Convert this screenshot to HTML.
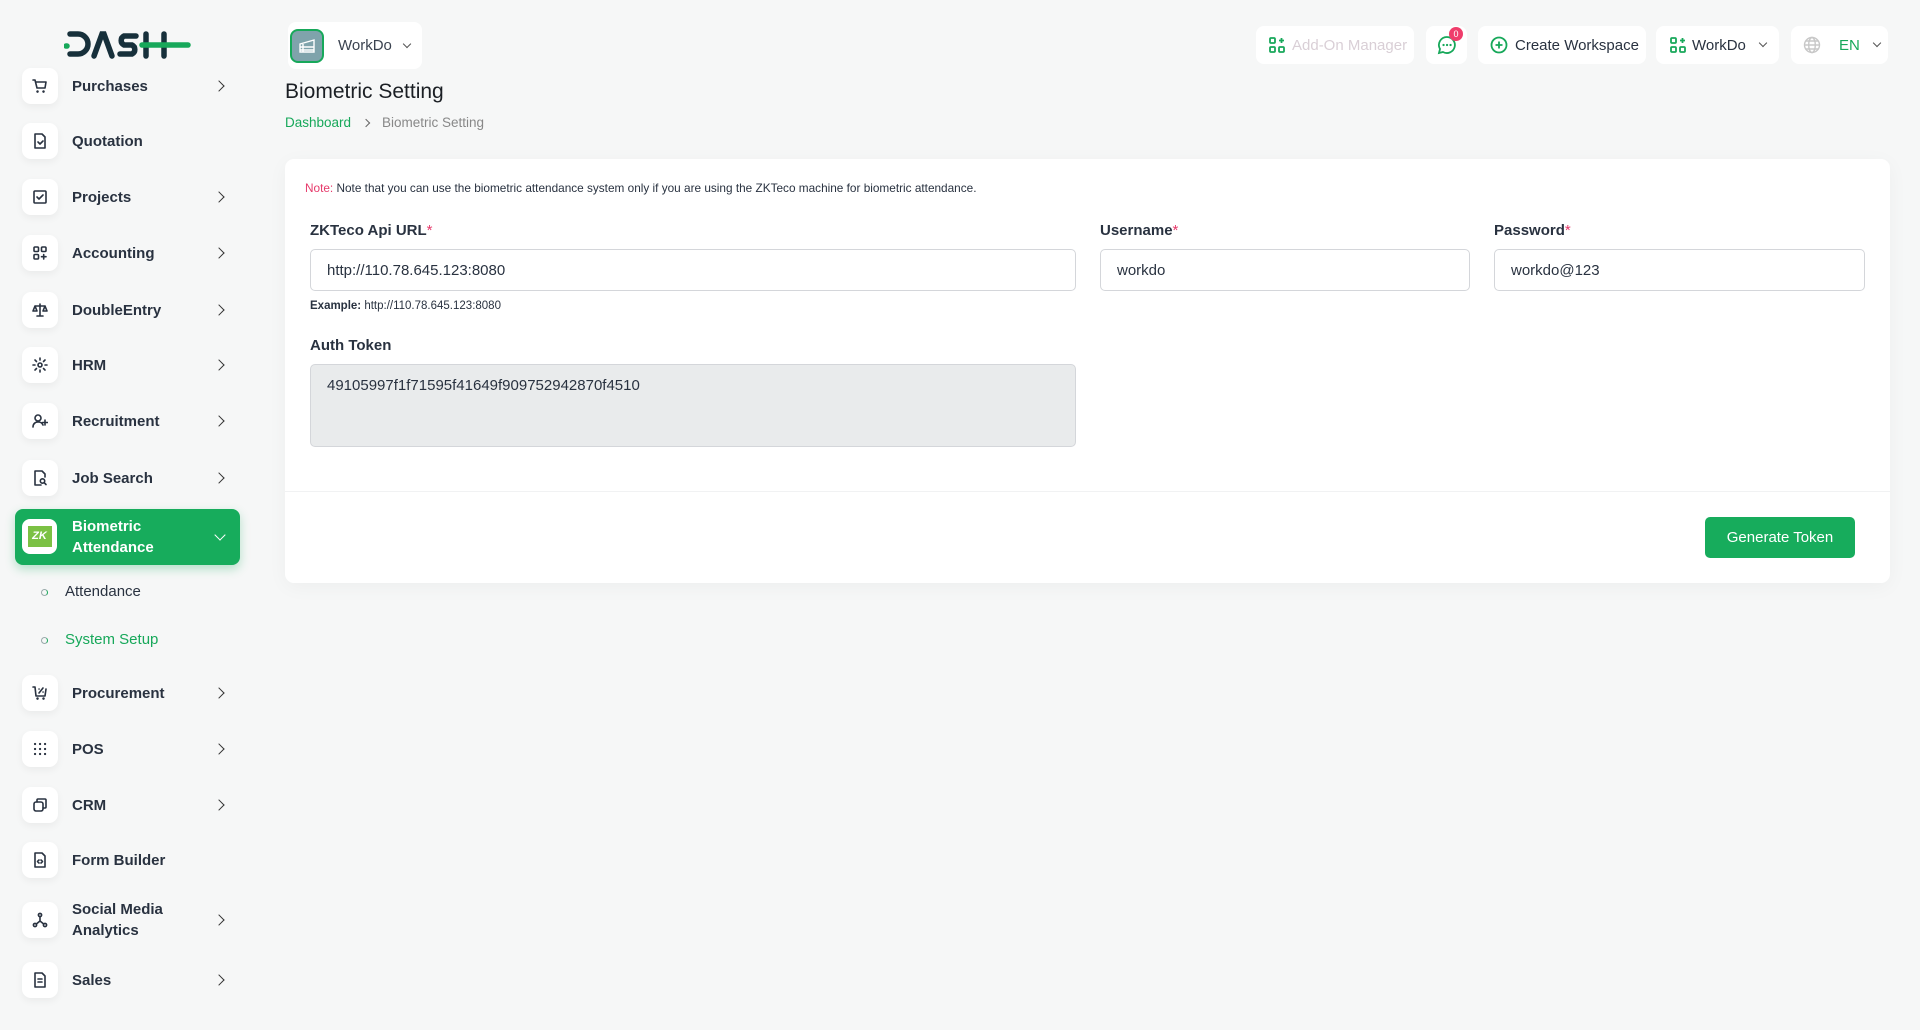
<!DOCTYPE html>
<html><head><meta charset="utf-8"><style>
*{box-sizing:border-box;margin:0;padding:0}
body{width:1920px;height:1030px;background:#f6f7f7;font-family:"Liberation Sans",sans-serif;color:#293240;position:relative;overflow:hidden}
.abs{position:absolute}
.item{position:absolute;left:22px;width:210px;height:40px;display:flex;align-items:center}
.ib{width:36px;height:36px;background:#fff;border-radius:9px;box-shadow:0 3px 8px rgba(0,0,0,.05);display:flex;align-items:center;justify-content:center;flex:none}
.ib svg{width:16px;height:16px;fill:none;stroke:#293240;stroke-width:1.6;stroke-linecap:round;stroke-linejoin:round}
.it{margin-left:14px;font-size:15px;font-weight:bold;color:#293240;line-height:21px}
.chev{position:absolute;left:193px;top:16px;width:8px;height:8px;border-right:1.6px solid #333;border-top:1.6px solid #333;transform:rotate(45deg)}
.tb{position:absolute;top:26px;height:38px;background:#fff;border-radius:8px;display:flex;align-items:center;font-size:15px;color:#293240}
.card{position:absolute;left:285px;top:159px;width:1605px;height:424px;background:#fff;border-radius:9px;box-shadow:0 4px 20px rgba(0,0,0,.04)}
.lbl{position:absolute;font-size:15px;font-weight:bold;color:#293240}
.lbl b{color:#e6396a;font-weight:normal}
.inp{position:absolute;height:42px;border:1px solid #d4d6da;border-radius:5px;font-size:15px;color:#293240;padding:12px 16px;background:#fff}
.dot{position:absolute;left:41px;width:7px;height:7px;border-radius:50%;border:1.5px solid #9aa;border-right-color:#17a85a}
</style></head><body>
<svg class="abs" style="left:64px;top:28px" width="128" height="34" viewBox="0 0 128 34">
<g fill="none" stroke="#17303b" stroke-width="5.5" stroke-linecap="round">
<path d="M6 6h8a10 10 0 0 1 0 20h-8"/>
<path d="M30 28L38 6h2L48 28"/>
<path d="M72 8h-12a5 5 0 0 0 0 9h8a5 5 0 0 1 0 9h-12"/>
<path d="M82 6v22M100 6v22"/>
</g>
<path d="M3 18h-1" stroke="#17a85a" stroke-width="5.5" stroke-linecap="round"/>
<path d="M78 17h46" stroke="#17a85a" stroke-width="5.5" stroke-linecap="round"/>
</svg>
<div class="item" style="top:66px"><div class="ib"><svg viewBox="0 0 16 16"><path d="M1 2h2l2 8h8l1-6H4M6 13.5a.5.5 0 1 0 0 .1M12 13.5a.5.5 0 1 0 0 .1"/></svg></div><div class="it">Purchases</div><div class="chev"></div></div>
<div class="item" style="top:121px"><div class="ib"><svg viewBox="0 0 16 16"><path d="M3 1h7l3 3v11H3zM6 9l2 2 3-3"/></svg></div><div class="it">Quotation</div></div>
<div class="item" style="top:177px"><div class="ib"><svg viewBox="0 0 16 16"><rect x="2" y="2" width="12" height="12" rx="1"/><path d="M5 8l2 2 4-4"/></svg></div><div class="it">Projects</div><div class="chev"></div></div>
<div class="item" style="top:233px"><div class="ib"><svg viewBox="0 0 16 16"><rect x="2" y="2" width="4.5" height="4.5" rx="1"/><rect x="9.5" y="2" width="4.5" height="4.5" rx="1"/><rect x="2" y="9.5" width="4.5" height="4.5" rx="1"/><path d="M11.7 9.5v4.5M9.5 11.7H14"/></svg></div><div class="it">Accounting</div><div class="chev"></div></div>
<div class="item" style="top:290px"><div class="ib"><svg viewBox="0 0 16 16"><path d="M8 2v12M3 4h10M3 4l-2 5h4zM13 4l-2 5h4zM5 14h6"/></svg></div><div class="it">DoubleEntry</div><div class="chev"></div></div>
<div class="item" style="top:345px"><div class="ib"><svg viewBox="0 0 16 16"><circle cx="8" cy="8" r="2"/><path d="M8 1v2M8 13v2M1 8h2M13 8h2M3 3l1.5 1.5M11.5 11.5L13 13M3 13l1.5-1.5M11.5 4.5L13 3"/></svg></div><div class="it">HRM</div><div class="chev"></div></div>
<div class="item" style="top:401px"><div class="ib"><svg viewBox="0 0 16 16"><circle cx="6" cy="5" r="3"/><path d="M1 14c0-3 2-5 5-5s4 1 5 3M13 7v5M10.5 9.5h5"/></svg></div><div class="it">Recruitment</div><div class="chev"></div></div>
<div class="item" style="top:458px"><div class="ib"><svg viewBox="0 0 16 16"><path d="M9 15H3V1h7l3 3v3"/><circle cx="10.5" cy="11" r="2.2"/><path d="M12.2 12.7L14 14.5"/></svg></div><div class="it">Job Search</div><div class="chev"></div></div>
<div class="abs" style="left:15px;top:509px;width:225px;height:56px;background:#17ac5c;border-radius:8px;box-shadow:0 4px 10px rgba(23,172,92,.3)"></div>
<div class="abs" style="left:22px;top:519px;width:35px;height:35px;background:#fff;border-radius:8px;display:flex;align-items:center;justify-content:center"><div style="width:24px;height:21px;background:#7bc144;color:#fff;font-size:11px;font-weight:bold;font-style:italic;text-align:center;line-height:21px">ZK</div></div>
<div class="abs" style="left:72px;top:516px;font-size:15px;font-weight:bold;color:#fff;line-height:21px">Biometric<br>Attendance</div>
<div class="abs" style="left:216px;top:531px;width:8px;height:8px;border-right:1.6px solid #fff;border-bottom:1.6px solid #fff;transform:rotate(45deg)"></div>
<div class="dot" style="top:589px"></div>
<div class="abs" style="left:65px;top:583px;font-size:15px;color:#293240">Attendance</div>
<div class="dot" style="top:637px"></div>
<div class="abs" style="left:65px;top:631px;font-size:15px;color:#17a85a">System Setup</div>
<div class="item" style="top:673px"><div class="ib"><svg viewBox="0 0 16 16"><path d="M1 2h2l1 9h9l1-7M6 13.5a.5.5 0 1 0 0 .1M12 13.5a.5.5 0 1 0 0 .1M7 8l4-5M7 4h.1M11 7h.1"/></svg></div><div class="it">Procurement</div><div class="chev"></div></div>
<div class="item" style="top:729px"><div class="ib"><svg viewBox="0 0 16 16" style="stroke-width:2.2"><path d="M3 3h.1M8 3h.1M13 3h.1M3 8h.1M8 8h.1M13 8h.1M3 13h.1M8 13h.1M13 13h.1"/></svg></div><div class="it">POS</div><div class="chev"></div></div>
<div class="item" style="top:785px"><div class="ib"><svg viewBox="0 0 16 16"><rect x="2" y="5" width="9" height="9" rx="2"/><path d="M5 5V3a1 1 0 0 1 1-1h7a1 1 0 0 1 1 1v7a1 1 0 0 1-1 1h-2"/></svg></div><div class="it">CRM</div><div class="chev"></div></div>
<div class="item" style="top:840px"><div class="ib"><svg viewBox="0 0 16 16"><path d="M3 1h7l3 3v11H3zM7 8l-1.5 1.5L7 11M9 8l1.5 1.5L9 11"/></svg></div><div class="it">Form Builder</div></div>
<div class="item" style="top:900px"><div class="ib"><svg viewBox="0 0 16 16"><circle cx="8" cy="3" r="1.6"/><circle cx="3" cy="13" r="1.6"/><circle cx="13" cy="13" r="1.6"/><path d="M8 4.6V9L4.3 12M8 9l3.7 3"/></svg></div><div class="it">Social Media<br>Analytics</div><div class="chev"></div></div>
<div class="item" style="top:960px"><div class="ib"><svg viewBox="0 0 16 16"><path d="M3 1h7l3 3v11H3zM6 7h4M6 10h4"/></svg></div><div class="it">Sales</div><div class="chev"></div></div>
<div class="tb" style="left:288px;top:22px;height:47px;width:134px">
<div style="margin-left:2px;width:34px;height:34px;border-radius:8px;background:#7fa3ab;border:2.5px solid #17a85a;display:flex;align-items:center;justify-content:center"><svg width="18" height="16" viewBox="0 0 18 16"><path d="M2 6l14-4v12H2zM2 9h14M2 12h14M5 6v8" stroke="#fff" stroke-width="1.4" fill="none"/></svg></div>
<span style="margin-left:14px;font-size:15px;color:#3b4350">WorkDo</span>
<span style="margin-left:12px;width:6px;height:6px;border-right:1.3px solid #555;border-bottom:1.3px solid #555;transform:rotate(45deg);margin-top:-4px"></span></div>
<div class="abs" style="left:285px;top:80px;font-size:21px;color:#1b1f24">Biometric Setting</div>
<div class="abs" style="left:285px;top:115px;font-size:13.5px;color:#17a85a">Dashboard</div>
<div class="abs" style="left:363px;top:120px;width:6px;height:6px;border-right:1.2px solid #666;border-top:1.2px solid #666;transform:rotate(45deg)"></div>
<div class="abs" style="left:382px;top:115px;font-size:13.5px;color:#888">Biometric Setting</div>
<div class="tb" style="left:1256px;width:158px"><svg style="margin-left:13px" width="16" height="16" viewBox="0 0 16 16" fill="none" stroke="#17a85a" stroke-width="1.8"><rect x="1" y="1" width="5" height="5" rx="1"/><rect x="1" y="10" width="5" height="5" rx="1"/><rect x="10" y="10" width="5" height="5" rx="1"/><path d="M12.5 1v5M10 3.5h5"/></svg><span style="margin-left:7px;color:#d9cfd6">Add-On Manager</span></div>
<div class="tb" style="left:1426px;width:41px;justify-content:center"><svg width="20" height="20" viewBox="0 0 20 20" fill="none" stroke="#17a85a" stroke-width="1.8"><path d="M10 2a8 8 0 1 1-4 15l-4 1 1-4A8 8 0 0 1 10 2z"/><path d="M6.5 10h.1M10 10h.1M13.5 10h.1" stroke-width="2.2" stroke-linecap="round"/></svg></div>
<div class="abs" style="left:1449px;top:27px;width:14px;height:14px;border-radius:50%;background:#ef3d6b;color:#fff;font-size:9px;text-align:center;line-height:14px">0</div>
<div class="tb" style="left:1478px;width:168px"><svg style="margin-left:12px" width="18" height="18" viewBox="0 0 18 18" fill="none" stroke="#17a85a" stroke-width="1.8"><circle cx="9" cy="9" r="7.5"/><path d="M9 5.5v7M5.5 9h7"/></svg><span style="margin-left:7px">Create Workspace</span></div>
<div class="tb" style="left:1656px;width:123px"><svg style="margin-left:14px" width="16" height="16" viewBox="0 0 16 16" fill="none" stroke="#17a85a" stroke-width="1.8"><rect x="1" y="1" width="5" height="5" rx="1"/><rect x="1" y="10" width="5" height="5" rx="1"/><rect x="10" y="10" width="5" height="5" rx="1"/><path d="M12.5 1v5M10 3.5h5"/></svg><span style="margin-left:6px">WorkDo</span><span style="margin-left:14px;width:6px;height:6px;border-right:1.3px solid #555;border-bottom:1.3px solid #555;transform:rotate(45deg);margin-top:-4px"></span></div>
<div class="tb" style="left:1791px;width:97px"><svg style="margin-left:12px" width="18" height="18" viewBox="0 0 18 18" fill="none" stroke="#c8c8c8" stroke-width="1.4"><circle cx="9" cy="9" r="7.5"/><ellipse cx="9" cy="9" rx="3.3" ry="7.5"/><path d="M1.5 9h15M3 5h12M3 13h12"/></svg><span style="margin-left:18px;color:#17a85a">EN</span><span style="margin-left:14px;width:6px;height:6px;border-right:1.3px solid #555;border-bottom:1.3px solid #555;transform:rotate(45deg);margin-top:-4px"></span></div>
<div class="card"></div>
<div class="abs" style="left:305px;top:181px;font-size:11.8px;color:#293240"><span style="color:#e6396a">Note:</span> Note that you can use the biometric attendance system only if you are using the ZKTeco machine for biometric attendance.</div>
<div class="lbl" style="left:310px;top:222px">ZKTeco Api URL<b>*</b></div>
<div class="inp" style="left:310px;top:249px;width:766px">http://110.78.645.123:8080</div>
<div class="abs" style="left:310px;top:300px;font-size:11.5px;color:#293240"><b>Example:</b> http://110.78.645.123:8080</div>
<div class="lbl" style="left:310px;top:337px">Auth Token</div>
<div class="inp" style="left:310px;top:364px;width:766px;height:83px;background:#e9ebec">49105997f1f71595f41649f909752942870f4510</div>
<div class="lbl" style="left:1100px;top:222px">Username<b>*</b></div>
<div class="inp" style="left:1100px;top:249px;width:370px">workdo</div>
<div class="lbl" style="left:1494px;top:222px">Password<b>*</b></div>
<div class="inp" style="left:1494px;top:249px;width:371px">workdo@123</div>
<div class="abs" style="left:285px;top:491px;width:1605px;height:1px;background:#f1f2f3"></div>
<div class="abs" style="left:1705px;top:517px;width:150px;height:41px;background:#17ac5c;border-radius:5px;color:#fff;font-size:15px;text-align:center;line-height:41px">Generate Token</div>
</body></html>
